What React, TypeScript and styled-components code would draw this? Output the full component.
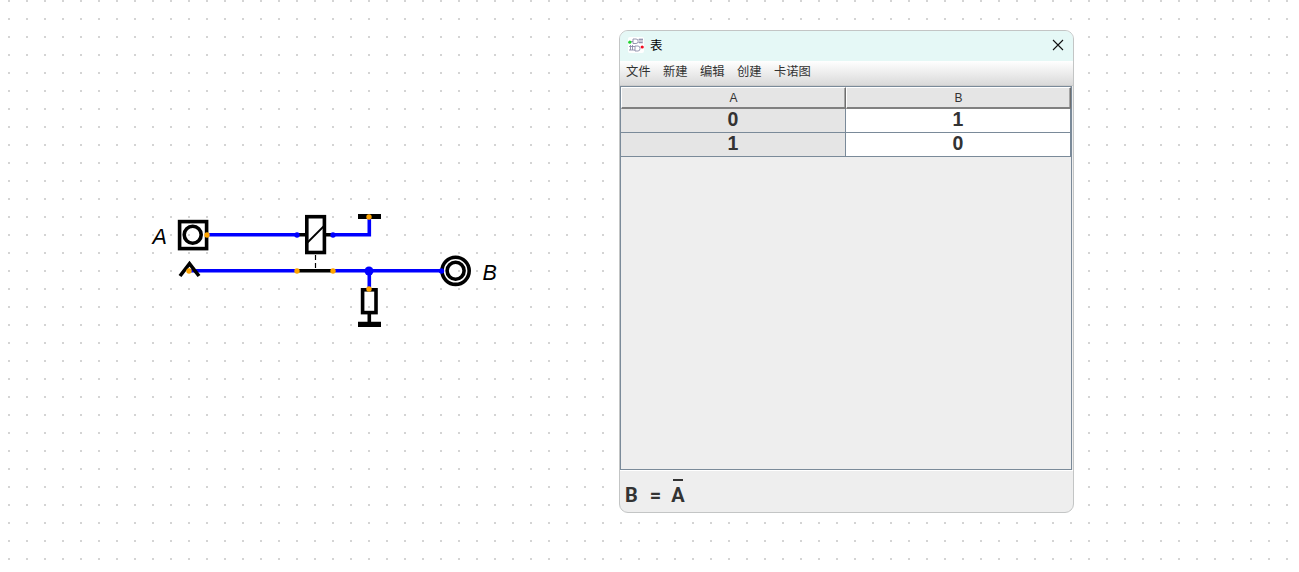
import React from 'react';
import styled, { createGlobalStyle } from 'styled-components';

const GlobalStyle = createGlobalStyle`
  * { box-sizing: border-box; }
  body { margin: 0; overflow: hidden; background: #fff; }
`;

const Canvas = styled.main`
  position: relative;
  width: 1299px;
  height: 572px;
  background: conic-gradient(from 270deg at 2px 2px, #d4d4d4 90deg, transparent 0) 8px 0 / 18px 18px #fff;
  font-family: 'Liberation Sans', 'Noto Sans CJK SC', sans-serif;
`;

const Circuit = styled.svg`
  display: block;
  width: 600px;
  height: 400px;
`;

const Label = styled.text`
  font: italic 21.5px 'Liberation Sans', sans-serif;
  fill: #000;
`;

const Window = styled.section`
  position: absolute;
  left: 619px;
  top: 30px;
  width: 455px;
  height: 483px;
  display: flex;
  flex-direction: column;
  overflow: hidden;
  border: 1px solid #c3c5c5;
  border-radius: 9px;
  background: #eee;
`;

const TitleBar = styled.header`
  flex: 0 0 30px;
  display: flex;
  align-items: center;
  padding: 0 9px 2px 8px;
  background: #e5f8f6;
`;

const Title = styled.h1`
  flex: 1;
  margin: -1px 0 0 6px;
  font: 400 12.5px/16px 'Noto Sans CJK SC', sans-serif;
  color: #000;
`;

const CloseButton = styled.button`
  display: flex;
  padding: 0;
  border: 0;
  background: none;
`;

const MenuBar = styled.nav`
  flex: 0 0 25px;
  display: flex;
  gap: 13px;
  padding: 1px 6px 0;
  border-bottom: 1px solid #ccc;
  background: linear-gradient(#fff, #dadada);
`;

const MenuItem = styled.span`
  font: 400 12.3px/19px 'Noto Sans CJK SC', sans-serif;
  color: #333;
  &:not(:last-child) { width: 24px; white-space: nowrap; }
`;

const TablePane = styled.div`
  flex: 0 0 384px;
  margin-right: 1px;
  border: 1px solid #7a8a99;
`;

const Row = styled.div`
  display: grid;
  grid-template-columns: 225px 225px;
`;

const HeaderCell = styled.div`
  height: 22px;
  border: solid;
  border-width: 1px 1px 2px 1px;
  border-color: #fff #6e6e6e #808080 #fff;
  background: #e5e5e5;
  box-shadow: inset -1px 0 #a5a5a5;
  font-size: 12px;
  line-height: 20px;
  text-align: center;
  color: #333;
`;

const Cell = styled.div<{ $input?: boolean }>`
  height: 24px;
  border: solid #7a8a99;
  border-width: 0 1px 1px 0;
  background: ${p => (p.$input ? '#e5e5e5' : '#fff')};
  font-size: 19.5px;
  font-weight: 700;
  line-height: 20px;
  text-align: center;
  color: #333;
`;

const Expression = styled.footer`
  flex: 1;
  display: flex;
  padding: 11px 5px 0;
  border-top: 1px solid #fff;
  font-family: Roboto, 'Liberation Sans', sans-serif;
  font-size: 20px;
  font-weight: 700;
  line-height: 26px;
  color: #333;
`;

const Equals = styled.span`
  margin: 0 10px 0 12px;
`;

const Negated = styled.span`
  position: relative;
  &::before {
    content: '';
    position: absolute;
    left: 2px;
    top: -3px;
    width: 10px;
    height: 2px;
    background: #333;
  }
`;

const AppIcon = () => (
  <svg width="16" height="16" viewBox="0 0 16 16" fill="none">
    <rect width="16" height="16" rx="2" fill="#fff" />
    <g stroke="#8c8ca8" strokeWidth="0.9">
      <path d="M5 2h3q2.2 0 2.2 2.3T8 6.5H5zM3 4.5h2M10.5 2.4h4.5M10.5 5.5h4M12 1.5v5M14 1.5v5" />
      <path d="M7 9h3q2 0 2 2.5T10 14H7zM1 9.5h6M1 13h6M2.5 8v5M4.5 8v5" />
    </g>
    <circle cx="1.8" cy="5.2" r="1.6" fill="#20d430" />
    <circle cx="14.2" cy="10" r="1.6" fill="#f00a20" />
  </svg>
);

const Pin = ({ x, y, blue }: { x: number; y: number; blue?: boolean }) => (
  <circle cx={x} cy={y} r="2.7" fill={blue ? '#00f' : '#ffa500'} />
);

const CircuitDrawing = () => (
  <Circuit viewBox="0 0 600 400" fill="none" stroke="#000" strokeWidth="3.6">
    <g stroke="none">
      <Label x="152.6" y="244">A</Label>
      <Label x="482.6" y="280">B</Label>
    </g>
    <path d="M207 234.7H297M333 234.7H369.3V217M189 270.7H297M333 270.7H441M369.3 270.7V289" stroke="#00f" />
    <rect x="179.6" y="221.6" width="27" height="27" />
    <circle cx="192.7" cy="234.8" r="8.5" />
    <path d="M180 276L189.5 263.6L199 276" />
    <path d="M299 234.7H306M325 234.7H331M297 270.7H333" />
    <rect x="306.8" y="216.7" width="17.6" height="35.8" />
    <path d="M307 243L324.5 225.5" strokeWidth="1.8" />
    <path d="M315.5 255V268" strokeWidth="1.2" strokeDasharray="5 3" />
    <path d="M358 216.5H381M358 324.3H381" strokeWidth="5.2" />
    <path d="M369.3 313V323" />
    <rect x="362.6" y="289.8" width="13.4" height="22.8" />
    <circle cx="455.6" cy="270.8" r="13.6" />
    <circle cx="455.6" cy="270.8" r="8.5" />
    <g stroke="none">
      <Pin x={207} y={235} />
      <Pin x={189} y={271} />
      <Pin x={297} y={235} blue />
      <Pin x={333} y={235} blue />
      <Pin x={369} y={217} />
      <Pin x={297} y={271} />
      <Pin x={333} y={271} />
      <Pin x={369} y={289} />
      <Pin x={441.5} y={271} blue />
      <circle cx="369" cy="271" r="4.5" fill="#00f" />
    </g>
  </Circuit>
);

const menus = ['文件', '新建', '编辑', '创建', '卡诺图'];
const rows = [[0, 1], [1, 0]];

export default function App() {
  return (
    <Canvas>
      <GlobalStyle />
      <CircuitDrawing />
      <Window>
        <TitleBar>
          <AppIcon />
          <Title>表</Title>
          <CloseButton aria-label="Close">
            <svg width="12" height="12" viewBox="0 0 12 12" stroke="#111" strokeWidth="1.1">
              <path d="M1 1L11 11M11 1L1 11" />
            </svg>
          </CloseButton>
        </TitleBar>
        <MenuBar>
          {menus.map(m => <MenuItem key={m}>{m}</MenuItem>)}
        </MenuBar>
        <TablePane>
          <Row>
            <HeaderCell>A</HeaderCell>
            <HeaderCell>B</HeaderCell>
          </Row>
          {rows.map(([a, b]) => (
            <Row key={a}>
              <Cell $input>{a}</Cell>
              <Cell>{b}</Cell>
            </Row>
          ))}
        </TablePane>
        <Expression>
          <span>B</span>
          <Equals>=</Equals>
          <Negated>A</Negated>
        </Expression>
      </Window>
    </Canvas>
  );
}
